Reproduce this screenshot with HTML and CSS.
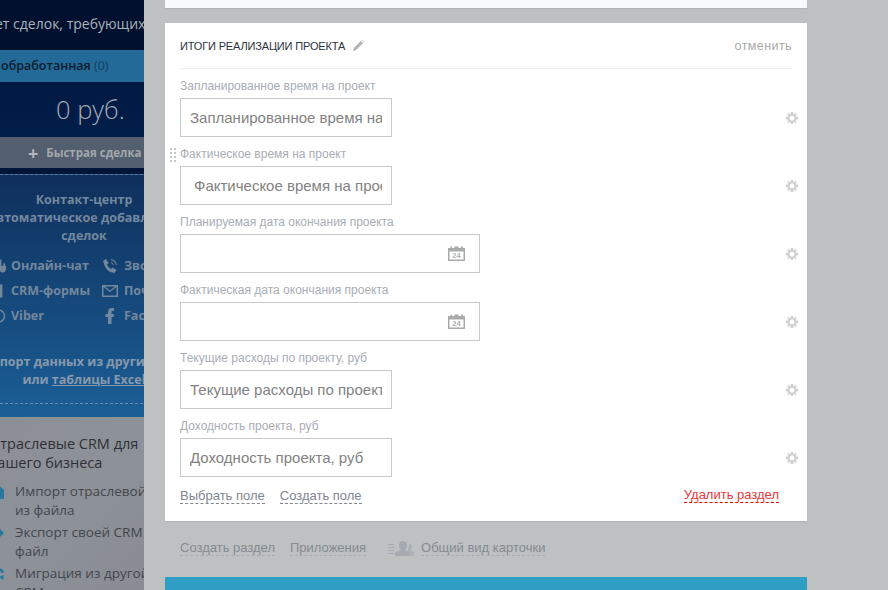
FILE: index.html
```html
<!DOCTYPE html>
<html lang="ru">
<head>
<meta charset="utf-8">
<title>Итоги реализации проекта</title>
<link rel="stylesheet" href="styles.css">
</head>
<body>
<div class="page">
  <aside class="side">
    <div class="side-notice">ет сделок, требующих</div>
    <div class="side-tab"><b>обработанная</b> <span>(0)</span></div>
    <div class="side-sum">0 руб.</div>
    <div class="side-quick"><i>+</i><b>Быстрая сделка</b></div>
    <div class="side-promo">
      <div class="promo-title">Контакт-центр<br><span class="nw">Автоматическое добавление</span><br>сделок</div>
      <div class="channels">
        <div class="channel"><svg class="ch-icon" viewBox="0 0 16 16"><path d="M7 1h2v7h2V5h2v3h1v3q0 3-3 4H9q-2-1-2-4zM5 8h1.500v4H5q-1-2 0-4z"/></svg><span>Онлайн-чат</span></div>
        <div class="channel"><svg class="ch-icon" viewBox="0 0 16 16"><path d="M1 3l3-2 2.500 4-1.500 1.500q1 3 4 4.500l1.500-1.500 4 2.500-2 3Q4 15 1 3zM9 1q5 1 6 6l-1 0q-1-4-5-5zM9 4q2 .5 3 3l-1 0q-.5-1.500-2-2z"/></svg><span>Звонки</span></div>
        <div class="channel"><svg class="ch-icon" viewBox="0 0 16 16"><path d="M6 1h4v14H6z"/></svg><span>CRM-формы</span></div>
        <div class="channel"><svg class="ch-icon" viewBox="0 0 16 16"><path d="M0 2h16v12H0zM1.500 4v8.500h13V4L8 9zM3 3.500l5 4 5-4z" fill-rule="evenodd"/></svg><span>Почта</span></div>
        <div class="channel"><svg class="ch-icon" viewBox="0 0 16 16"><path d="M6 1a7 7 0 1 0 0 14A7 7 0 0 0 6 1zm0 1.500a5.500 5.500 0 1 1 0 11 5.500 5.500 0 0 1 0-11z" fill-rule="evenodd"/></svg><span>Viber</span></div>
        <div class="channel"><svg class="ch-icon" viewBox="0 0 16 16"><path d="M6 16V9H3.500V6H6V4q0-4 4-4h2v3h-1.500Q9.500 3 9.500 4v2H12l-.5 3h-2v7z"/></svg><span>Facebook</span></div>
      </div>
      <div class="promo-import"><span class="nw nw-shift">Импорт данных из других CRM</span><br>или <u>таблицы Excel</u></div>
    </div>
    <div class="side-crm">
      <h3>Отраслевые CRM для<br>вашего бизнеса</h3>
      <ul class="crm-list">
        <li><svg class="crm-mark" viewBox="0 0 11 14"><path d="M5.500 0L11 5v9H0V5z"/></svg>Импорт отраслевой CRM<br>из файла</li>
        <li><svg class="crm-mark" viewBox="0 0 11 14"><path d="M6 2l5 5-5 5V9H2V5h4z"/></svg>Экспорт своей CRM в<br>файл</li>
        <li><svg class="crm-mark" viewBox="0 0 11 14"><path d="M5 1q5 0 6 5H8.500Q8 3.500 5 3.500zM5 13q-4 0-5-5h2.500Q3 10.500 5 10.500zM6 10l5-2-1 5z"/></svg>Миграция из другой<br>CRM</li>
      </ul>
    </div>
  </aside>

  <main class="main">
    <div class="card-top"></div>
    <section class="card">
      <header class="card-head">
        <h2>ИТОГИ РЕАЛИЗАЦИИ ПРОЕКТА</h2>
        <svg class="pencil" viewBox="0 0 12 12"><path d="M0 12l1-3.500L8.500 1 11 3.500 3.500 11zM9.300.3l.7-.3 2 2-.3.7z"/></svg>
        <a class="cancel">отменить</a>
      </header>
      <div class="fields">
        <div class="field">
          <div class="field-body"><label>Запланированное время на проект</label>
            <div class="box"><span class="box-text">Запланированное время на проект</span></div></div>
          <svg class="gear"><use href="#gear"/></svg>
        </div>
        <div class="field">
          <span class="drag"></span>
          <div class="field-body"><label>Фактическое время на проект</label>
            <div class="box box-indent"><span class="box-text">Фактическое время на проект</span></div></div>
          <svg class="gear"><use href="#gear"/></svg>
        </div>
        <div class="field">
          <div class="field-body"><label>Планируемая дата окончания проекта</label>
            <div class="box box-date"><svg class="cal"><use href="#cal"/></svg></div></div>
          <svg class="gear"><use href="#gear"/></svg>
        </div>
        <div class="field">
          <div class="field-body"><label>Фактическая дата окончания проекта</label>
            <div class="box box-date"><svg class="cal"><use href="#cal"/></svg></div></div>
          <svg class="gear"><use href="#gear"/></svg>
        </div>
        <div class="field">
          <div class="field-body"><label>Текущие расходы по проекту, руб</label>
            <div class="box"><span class="box-text">Текущие расходы по проекту, руб</span></div></div>
          <svg class="gear"><use href="#gear"/></svg>
        </div>
        <div class="field">
          <div class="field-body"><label>Доходность проекта, руб</label>
            <div class="box"><span class="box-text">Доходность проекта, руб</span></div></div>
          <svg class="gear"><use href="#gear"/></svg>
        </div>
      </div>
      <footer class="card-foot">
        <a class="dash">Выбрать поле</a>
        <a class="dash">Создать поле</a>
        <a class="dash danger">Удалить раздел</a>
      </footer>
    </section>
    <nav class="actions">
      <a class="dash-light">Создать раздел</a>
      <a class="dash-light">Приложения</a>
      <svg class="people" viewBox="0 0 26 16"><path d="M0 4h6v1H0zM0 7h6v1H0zM0 10h6v1H0zM0 13h6v1H0z"/><path d="M13 1q4 0 4 4.500 0 3-2 4.500l4 2.500V16H5v-3.500L11 10q-2-1.500-2-4.500Q9 1 13 1z" transform="translate(2 0)"/><path d="M21 4q3 0 3 3.500 0 2-1.500 3L26 12.500V16h-5v-4l-2-1q2-2 2-7z" opacity=".7"/></svg>
      <a class="dash-light">Общий вид карточки</a>
    </nav>
    <div class="bar"></div>
  </main>
</div>
<svg class="defs" width="0" height="0">
  <symbol id="gear" viewBox="0 0 12 12">
    <path fill="#cfd0d1" fill-rule="evenodd" d="M4.800 0h2.400l.3 1.700 1 .4L10 1.200 10.800 2l-.9 1.500.4 1L12 4.800v2.400l-1.700.3-.4 1 .9 1.500-.8.8-1.500-.9-1 .4L7.200 12H4.800l-.3-1.700-1-.4-1.500.9-.8-.8.9-1.500-.4-1L0 7.200V4.800l1.700-.3.4-1L1.200 2 2 1.200l1.500.9 1-.4zM6 3.500a2.500 2.500 0 1 0 0 5 2.500 2.500 0 0 0 0-5z"/>
  </symbol>
  <symbol id="cal" viewBox="0 0 17 15">
    <path fill="#a9aaab" fill-rule="evenodd" d="M0 2h2.500V.5h1.500V2h2.500V.5h4V2h2.500V.5H15V2h2v13H0zM1.500 5.500V13.500h14V5.500z"/>
    <text x="8.500" y="12.300" text-anchor="middle" class="cal-num">24</text>
  </symbol>
</svg>
</body>
</html>
```
FILE: styles.css
```css
* { box-sizing: border-box; }
html, body { margin: 0; height: 100%; }
body { overflow: hidden; font-family: "Liberation Sans", Arial, sans-serif; background: #bdc1c2; }
a { text-decoration: none; }
.defs { position: absolute; }

.page { display: flex; width: 888px; height: 590px; overflow: hidden; }

/* dimmed sidebar */
.side { flex: 0 0 144px; width: 144px; overflow: hidden; font-family: "Open Sans", sans-serif; background: #001537; }
.side > * { width: 168px; }
.side-notice { height: 50px; padding-top: 14px; margin-left: -5px; white-space: nowrap; font-size: 14px; line-height: 20px; color: #aeb3bb; background: #00102f; }
.side-tab { height: 32px; padding-left: 1px; line-height: 32px; font-size: 12.500px; white-space: nowrap; background: #236a98; color: #0c1d2e; }
.side-tab b { font-weight: 600; }
.side-tab span { color: #143d5e; }
.side-sum { height: 55px; padding-left: 56px; font-size: 25.500px; line-height: 54px; font-weight: 300; color: #a4abb5; white-space: nowrap; background: linear-gradient(#001a42, #011e4a); }
.side-quick { height: 31px; padding-left: 28px; display: flex; align-items: center; gap: 8px; font-size: 11.500px; white-space: nowrap; background: #535f6f; color: #a2a7ae; }
.side-quick i { font-style: normal; font-weight: 700; font-size: 18px; color: #b3b6bb; }
.side-quick b { font-weight: 700; }
.side-promo { height: 243px; margin-top: 6px; padding-top: 16px; border-top: 1px dashed #5d7592; position: relative; text-align: center; color: #73879d; font-weight: 700; font-size: 12.500px;
  background: linear-gradient(#0f2f5c, #1b5f97); }
.promo-title { line-height: 18px; height: 54px; }
.nw { white-space: nowrap; display: inline-block; margin-left: -40px; margin-right: -40px; }
.nw-shift { margin-left: -46px; }
.channels { display: grid; grid-template-columns: 102px 120px; grid-auto-rows: 25px; margin-top: 8px; width: 222px; text-align: left; }
.channel { display: flex; align-items: center; gap: 6px; white-space: nowrap; }
.channel .ch-icon { width: 16px; }
.channel:nth-child(odd) { margin-left: -7px; gap: 3px; }
.channel:nth-child(odd) .ch-icon { width: 15px; }
.ch-icon { height: 16px; fill: #73879d; flex: none; }
.promo-import { margin-top: 25px; line-height: 18px; white-space: nowrap; color: #8899ad; }
.promo-import u { text-decoration-thickness: 1px; }
.side-promo::after { content: ""; position: absolute; left: 0; right: 0; bottom: 13px; border-top: 1px dashed #6f8aa8; }
.side-crm { height: 173px; width: 144px; padding-top: 17px; color: #34383e; background: linear-gradient(135deg, #8c9096, #8d9198 50%, #898c93); }
.side-crm h3 { margin: 0 0 0 -11px; width: 200px; font-size: 14.500px; font-weight: 400; line-height: 19px; white-space: nowrap; color: #2d3036; }
.crm-list { list-style: none; margin: 10px 0 0; padding: 0 0 0 15px; width: 200px; font-size: 13.500px; line-height: 19px; white-space: nowrap; color: #43474e; }
.crm-list li { position: relative; margin-bottom: 3px; }
.crm-mark { position: absolute; left: -22px; top: 3px; width: 11px; height: 14px; fill: #27789f; }

/* main column */
.main { flex: 1; padding: 0 81px 0 21px; display: flex; flex-direction: column; }
.card-top { flex: none; height: 8px; background: #f8f9fb; box-shadow: 0 1px 1px #b0b4b5; }
.card { flex: none; height: 498px; margin-top: 15px; padding: 0 15px; background: #fff; box-shadow: 0 1px 1px #b0b4b5; }
.card-head { height: 46px; display: flex; align-items: center; border-bottom: 1px solid #e8ebee; }
.card-head h2 { margin: 0; font-size: 11px; letter-spacing: -.16px; font-weight: 400; color: #2b3240; white-space: nowrap; }
.pencil { width: 11px; height: 11px; margin-left: 8px; fill: #b2b4b7; }
.cancel { margin-left: auto; font-size: 12.500px; letter-spacing: .42px; color: #a9a9a9; }
.fields { padding-top: 9px; }
.field { height: 68px; position: relative; display: flex; align-items: flex-end; padding-bottom: 9px; }
.field label { display: block; height: 14px; margin-bottom: 5px; font-size: 12px; line-height: 14px; color: #a9adb5; white-space: nowrap; }
.box { width: 212px; height: 39px; padding: 0 9px 0 9px; display: flex; align-items: center; border: 1px solid #c6c8cc; background: #fff; overflow: hidden; }
.box-indent { padding-left: 13px; }
.box-date { width: 300px; justify-content: flex-end; padding-right: 14px; }
.box-text { display: block; width: 100%; overflow: hidden; white-space: nowrap; font-size: 15px; line-height: 20px; color: #828282; }
.gear { width: 12px; height: 12px; position: absolute; right: -6px; bottom: 22px; }
.cal { width: 17px; height: 15px; }
.cal-num { font: 700 7.500px "Liberation Sans", Arial, sans-serif; fill: #b0b1b2; }
.drag { position: absolute; left: -11px; top: 1px; width: 8px; height: 16px; background-image: radial-gradient(circle, #c4c7ca 1.200px, transparent 1.400px); background-size: 4px 4px; }
.card-foot { display: flex; gap: 15px; align-items: flex-start; padding-top: 2px; }
.dash { font-size: 13px; line-height: 15px; color: #80858f; border-bottom: 1px dashed #80858f; }
.danger { margin-left: auto; margin-right: 13px; margin-top: -1px; color: #e5383b; border-bottom-color: #e00; }
.actions { flex: none; height: 56px; padding: 19px 0 0 15px; display: flex; align-items: flex-start; gap: 15px; }
.dash-light { font-size: 13px; line-height: 15px; color: #868a92; border-bottom: 1px dashed #a9adb0; }
.people { width: 26px; height: 16px; margin: 0 -8px 0 7px; fill: #a5a9b0; }
.bar { flex: 1; background: #2f9ec5; }
```
